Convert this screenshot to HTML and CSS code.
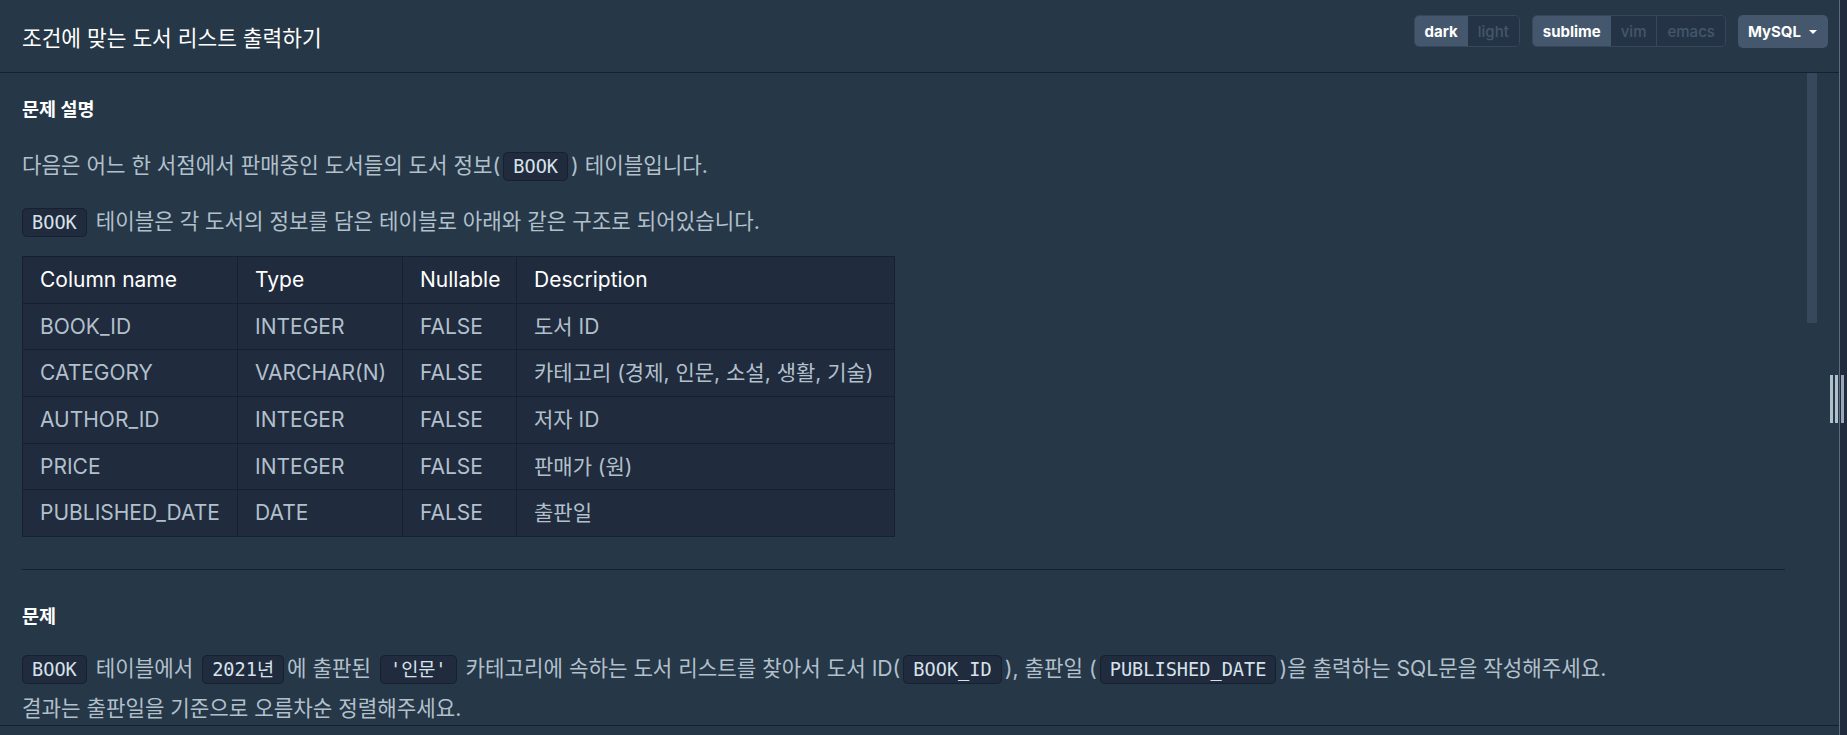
FILE: index.html
```html
<!DOCTYPE html>
<html lang="ko">
<head>
<meta charset="utf-8">
<title>조건에 맞는 도서 리스트 출력하기</title>
<link rel="stylesheet" href="styles.css">
</head>
<body>
<div class="app">
  <section class="panel">
    <header class="topbar">
      <h1 class="title">조건에 맞는 도서 리스트 출력하기</h1>
      <div class="controls">
        <div class="seg"><span class="opt active">dark</span><span class="opt">light</span></div>
        <div class="seg"><span class="opt active">sublime</span><span class="opt">vim</span><span class="opt sep">emacs</span></div>
        <div class="dropdown">MySQL<span class="caret"></span></div>
      </div>
    </header>
    <div class="content">
      <div class="thumb"></div>
      <div class="doc">
        <h2 class="h">문제 설명</h2>
        <p class="intro">다음은 어느 한 서점에서 판매중인 도서들의 도서 정보(<code>BOOK</code>) 테이블입니다.</p>
        <p class="lead"><code class="first">BOOK</code> 테이블은 각 도서의 정보를 담은 테이블로 아래와 같은 구조로 되어있습니다.</p>
        <table class="schema">
          <colgroup><col class="c1"><col class="c2"><col class="c3"><col class="c4"></colgroup>
          <thead>
            <tr><th>Column name</th><th>Type</th><th>Nullable</th><th>Description</th></tr>
          </thead>
          <tbody>
            <tr><td>BOOK_ID</td><td>INTEGER</td><td>FALSE</td><td>도서 ID</td></tr>
            <tr><td>CATEGORY</td><td>VARCHAR(N)</td><td>FALSE</td><td>카테고리 (경제, 인문, 소설, 생활, 기술)</td></tr>
            <tr><td>AUTHOR_ID</td><td>INTEGER</td><td>FALSE</td><td>저자 ID</td></tr>
            <tr><td>PRICE</td><td>INTEGER</td><td>FALSE</td><td>판매가 (원)</td></tr>
            <tr><td>PUBLISHED_DATE</td><td>DATE</td><td>FALSE</td><td>출판일</td></tr>
          </tbody>
        </table>
        <hr class="rule">
        <h2 class="h h2">문제</h2>
        <p><code class="first">BOOK</code> 테이블에서 <code>2021년</code>에 출판된 <code>'인문'</code> 카테고리에 속하는 도서 리스트를 찾아서 도서 ID(<code>BOOK_ID</code>), 출판일 (<code>PUBLISHED_DATE</code>)을 출력하는 SQL문을 작성해주세요.<br>결과는 출판일을 기준으로 오름차순 정렬해주세요.</p>
      </div>
    </div>
    <div class="foot"></div>
  </section>
  <div class="divider">
    <div class="grip"><span class="bar"></span><span class="bar b2"></span><span class="bar b3"></span></div>
  </div>
  <div class="editor"></div>
</div>
</body>
</html>
```

FILE: styles.css
```css
* { box-sizing: border-box; }
html, body { margin: 0; height: 100%; }
body {
  background: #263747;
  font-family: Inter, "Noto Sans CJK KR", sans-serif;
  color: #B2C0CC;
  overflow: hidden;
}
.app { display: flex; height: 735px; }
.panel { flex: 1; min-width: 0; display: flex; flex-direction: column; }

.topbar {
  flex: none;
  height: 73px;
  display: flex;
  align-items: center;
  justify-content: space-between;
  padding: 0 11px 0 22px;
  border-bottom: 1px solid #172030;
}
.title { margin: 0; font-size: 21.4px; font-weight: 400; color: #fff; }
.controls { align-self: flex-start; margin-top: 15px; display: flex; gap: 12px; }
.seg {
  display: flex;
  height: 32px;
  border: 1px solid #37485D;
  border-radius: 5px;
  overflow: hidden;
}
.opt {
  display: flex;
  align-items: center;
  padding: 0 10px;
  font-size: 15px;
  font-weight: 500;
  color: #44576C;
  background: #243446;
}
.opt.active { background: #44576C; color: #fff; font-weight: 700; }
.opt.sep { border-left: 1px solid #37485D; }
.dropdown {
  display: flex;
  align-items: center;
  gap: 8px;
  height: 33px;
  padding: 0 11px 0 10px;
  background: #44576C;
  border-radius: 5px;
  color: #fff;
  font-size: 15px;
  font-weight: 700;
}
.caret {
  width: 0; height: 0;
  border-left: 4px solid transparent;
  border-right: 4px solid transparent;
  border-top: 4px solid #fff;
}

.content { flex: 1; position: relative; overflow: hidden; }
.thumb { position: absolute; top: 0; right: 22px; width: 10px; height: 250px; background: #37485D; }
.doc { padding: 23px 54px 0 22px; }
.h { margin: 0 0 24px; font-size: 18.5px; font-weight: 700; line-height: 26px; color: #fff; }
.h2 { margin-bottom: 20px; }
p { margin: 0 0 18px; font-size: 21.2px; line-height: 38px; }
p.intro { margin-bottom: 16px; }
p.lead { margin-bottom: 14px; }
code {
  font-family: "DejaVu Sans Mono", "Noto Sans CJK KR", monospace;
  font-size: 18.6px;
  color: #D7E2EB;
  background: #202B3D;
  border: 1px solid #172030;
  border-radius: 5px;
  padding: 3px 9px;
  margin: 0 3px;
}
code.first { margin-left: 0; }

.schema {
  border-collapse: collapse;
  table-layout: fixed;
  width: 872px;
  background: #202B3D;
  font-size: 21px;
  margin: 0 0 32px;
}
.schema th, .schema td {
  border: 1px solid #172030;
  padding: 10px 17px;
  line-height: 25.67px;
  text-align: left;
  font-weight: 400;
  white-space: nowrap;
}
.schema th { color: #fff; }
.c1 { width: 215px; }
.c2 { width: 165px; }
.c3 { width: 114px; }
.c4 { width: 378px; }

.rule { border: 0; border-top: 1px solid #172030; margin: 0 0 33px; }

.foot { flex: none; height: 10px; border-top: 1px solid #172030; }

.divider { flex: none; width: 1px; background: #5d6b7a; position: relative; }
.grip { position: absolute; top: 375px; left: -9px; height: 48px; display: flex; }
.bar { width: 3px; height: 48px; background: #B2C0CC; }
.b2 { margin-left: 2px; }
.b3 { margin-left: 3px; background: #98A8B9; }
.editor { flex: none; width: 7px; background: #202B3D; }
```
